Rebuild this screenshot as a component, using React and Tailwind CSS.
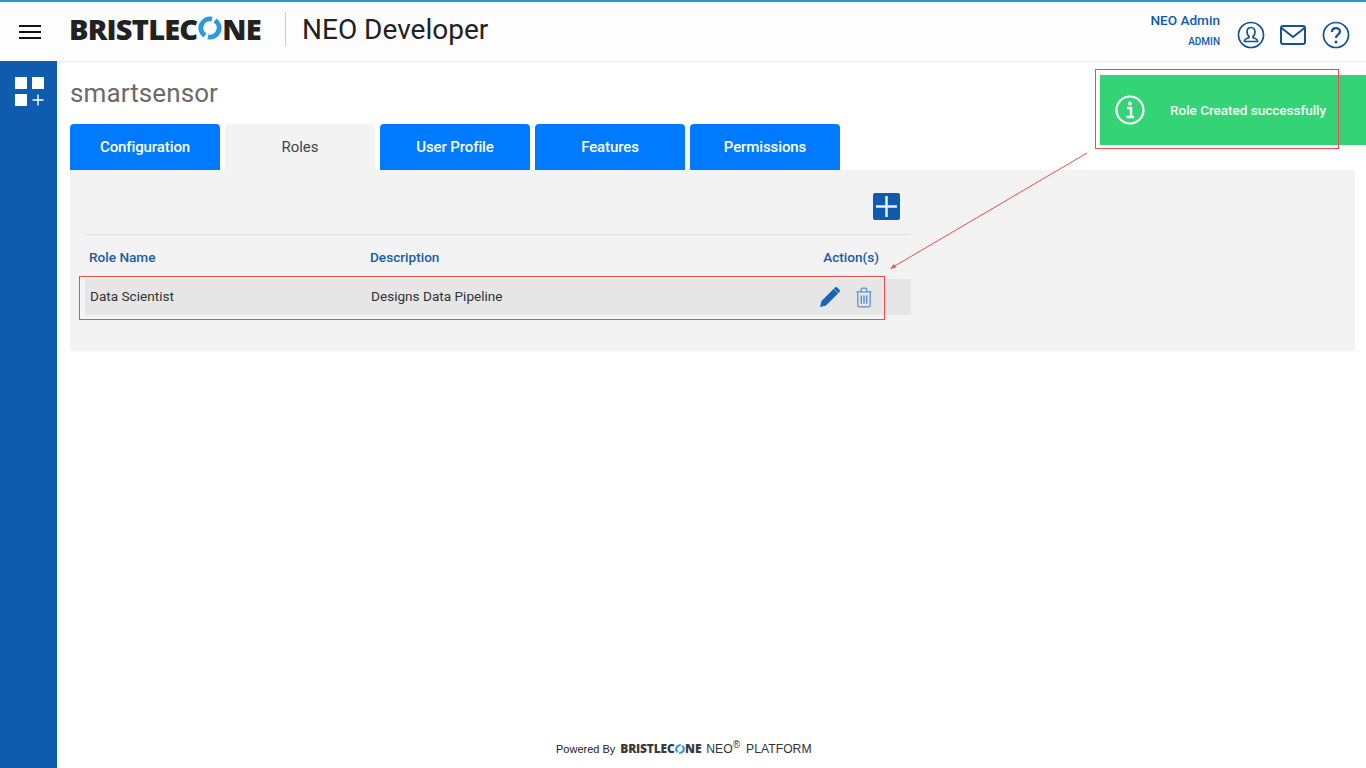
const Logo = ({ small }) => (
  <span className={small ? "inline-flex items-center font-[family-name:Open_Sans] font-extrabold text-[12px] leading-none tracking-[-0.2px] text-[#3a3a3a]" : "inline-flex items-center -ml-px font-[family-name:Open_Sans] font-extrabold text-[29px] leading-none tracking-[-0.8px] text-[#222222]"}>
    BRISTLEC
    <svg viewBox="0 0 24 24" className={small ? "w-[10px] h-[10px] mx-[0.3px]" : "w-[24px] h-[24px] mx-[0.5px]"}>
      <path d="M14 3.2A9 9 0 0 0 7 19.5" fill="none" stroke="#2a9bd8" strokeWidth="5" />
      <path d="M10 20.8A9 9 0 0 0 17 4.5" fill="none" stroke="#2a9bd8" strokeWidth="5" />
    </svg>
    NE
  </span>
);

const Tab = ({ label, active }) => (
  <div className={active
    ? "w-[150px] h-[46px] rounded-t flex items-center justify-center bg-[#f3f3f3] text-[#444444] text-[15px]"
    : "w-[150px] h-[46px] rounded-t flex items-center justify-center bg-[#007bff] text-white text-[15px] font-medium tracking-[-0.1px]"}>
    {label}
  </div>
);

export default function App() {
  return (
    <div className="relative h-screen flex flex-col overflow-hidden bg-white font-[family-name:Roboto]">
      <header className="h-[61px] shrink-0 flex items-center border-t-2 border-[#2a9bd8] bg-[#fdfdfd] shadow-[0_1px_1px_#ececec]">
        <div className="w-[70px] shrink-0 pl-[19px] flex flex-col gap-[4px]">
          <span className="block w-[22px] h-[2px] bg-[#111111]" />
          <span className="block w-[22px] h-[2px] bg-[#111111]" />
          <span className="block w-[22px] h-[2px] bg-[#111111]" />
        </div>
        <div className="w-[192px] -mt-[3px]"><Logo /></div>
        <div className="ml-[23px] h-[34px] w-px bg-[#cccccc] -mt-[5px]" />
        <div className="ml-[16px] text-[28px] leading-none text-[#222222] -mt-[3px]">NEO Developer</div>
        <div className="ml-auto flex items-center">
          <div className="flex flex-col items-end text-[#0f5cae] -mt-[3px]">
            <span className="text-[13.6px] leading-[16px] font-medium">NEO Admin</span>
            <span className="text-[10px] leading-[12px] font-medium mt-[8px]">ADMIN</span>
          </div>
          <svg viewBox="0 0 28 28" className="w-[28px] h-[28px] ml-[17px] mt-[7px]" fill="none" stroke="#16528f" strokeWidth="1.7">
            <circle cx="14" cy="14" r="12.5" />
            <path d="M14 6.5c-2.6 0-4 2-4 4.4 0 2 .9 3.500 2 4.400v1.200c-1.500 1-4.500 1.200-4.500 3.300v.7h13v-.7c0-2.100-3-2.300-4.500-3.300v-1.200c1.100-.9 2-2.400 2-4.400 0-2.400-1.400-4.400-4-4.400z" />
          </svg>
          <svg viewBox="0 0 26 22" className="w-[26px] h-[22px] ml-[15px] mt-[7px]" fill="none" stroke="#16528f" strokeWidth="2">
            <rect x="1" y="2" width="24" height="18" rx="2" />
            <path d="M1.500 4l11.500 9L24.500 4" />
          </svg>
          <svg viewBox="0 0 28 28" className="w-[28px] h-[28px] ml-[16px] mr-[16px] mt-[7px]" fill="none" stroke="#16528f" strokeWidth="1.7">
            <circle cx="14" cy="14" r="12.500" />
            <path d="M10 11c0-2.400 1.800-3.800 4-3.800s4 1.400 4 3.400c0 3-4 3-4 6.400" strokeWidth="2.300" />
            <circle cx="14" cy="21" r="1.500" fill="#16528f" stroke="none" />
          </svg>
        </div>
      </header>

      <div className="flex-1 flex min-h-0">
        <aside className="w-[57px] shrink-0 bg-[#0f5cae] pt-[16px] pl-[15px]">
          <div className="grid grid-cols-[12px_12px] gap-x-[5px] gap-y-[5px]">
            <span className="block h-[12px] bg-white" />
            <span className="block h-[12px] bg-white" />
            <span className="block h-[12px] bg-white" />
            <svg viewBox="0 0 12 12" className="w-[12px] h-[12px]" stroke="#ffffff" strokeWidth="1.400"><path d="M6 0.500v11M0.500 6h11" /></svg>
          </div>
        </aside>

        <main className="flex-1 min-w-0 flex flex-col pl-[13px] pr-[11px]">
          <h1 className="mt-[17px] h-[30px] text-[26px] leading-[30px] tracking-[0.1px] text-[#6a6a6a]">smartsensor</h1>
          <div className="mt-[16px] flex gap-[5px]">
            <Tab label="Configuration" />
            <Tab label="Roles" active />
            <Tab label="User Profile" />
            <Tab label="Features" />
            <Tab label="Permissions" />
          </div>
          <section className="h-[181px] bg-[#f3f3f3] pl-[15px] pt-[23px]">
            <div className="w-[826px]">
              <div className="h-[42px] border-b border-[#dfdfe6] flex justify-end items-start pr-[11px]">
                <div className="w-[27px] h-[27px] rounded-[2px] bg-[#0f5cae] flex items-center justify-center">
                  <svg viewBox="0 0 20 20" className="w-[21px] h-[21px]" stroke="#e8eef6" strokeWidth="2.400"><path d="M10 0v20M0 10h20" /></svg>
                </div>
              </div>
              <div className="h-[44px] flex items-center text-[13.6px] font-medium text-[#1a5cab]">
                <span className="w-[285px] pl-[4px]">Role Name</span>
                <span className="flex-1">Description</span>
                <span className="mr-[32px]">Action(s)</span>
              </div>
              <div className="h-[36px] bg-[#e6e6e6] flex items-center text-[13.6px] text-[#333333]">
                <span className="w-[286px] pl-[5px] pb-[1px]">Data Scientist</span>
                <span className="flex-1 pb-[1px]">Designs Data Pipeline</span>
                <svg viewBox="0 0 22 22" className="w-[22px] h-[22px] mr-[14px]" fill="#1a63b5">
                  <path d="M1 21l1.500-6L14.500 3l4.500 4.500L7 19.500z" />
                  <path d="M15.800 1.700c.8-.8 1.800-.8 2.500-.1l2.100 2.100c.7.700.7 1.700-.1 2.500l-1 1-4.500-4.500z" />
                </svg>
                <svg viewBox="0 0 18 22" className="w-[18px] h-[21px] mr-[38px] mt-[1px]" fill="none" stroke="#5c8fcb" strokeWidth="1.300">
                  <path d="M1 5h16M6 4.500V3c0-1 .8-1.800 1.800-1.800h2.400c1 0 1.800.8 1.800 1.800v1.500" />
                  <path d="M2.500 5.500v13.300c0 1.200.8 2 2 2h9c1.200 0 2-.8 2-2V5.500" />
                  <path d="M6.200 9v8.500M9 9v8.500M11.800 9v8.500" strokeWidth="1.500" />
                </svg>
              </div>
            </div>
          </section>
          <footer className="mt-auto h-[39px] flex items-start pt-[11px] pl-[486px] text-[#222222] font-[family-name:Liberation_Sans]">
            <span className="text-[11px] leading-[18px] mr-[5px]">Powered By</span>
            <span className="h-[18px] w-[80px] flex items-center"><Logo small /></span>
            <span className="text-[12.2px] leading-[18px] ml-[6px] text-[#333333]">NEO<sup className="text-[10px] leading-none">®</sup></span>
            <span className="text-[12.2px] leading-[18px] ml-[6px] text-[#333333]">PLATFORM</span>
          </footer>
        </main>
      </div>

      {/* toast */}
      <div className="absolute left-[1100px] top-[75px] w-[266px] h-[70px] bg-[#34d375] flex items-center text-white">
        <svg viewBox="0 0 30 30" className="w-[30px] h-[30px] ml-[15px]" fill="none" stroke="#ffffff" strokeWidth="2.200">
          <circle cx="15" cy="15" r="13.500" />
          <circle cx="15" cy="8.500" r="1.900" fill="#ffffff" stroke="none" />
          <path d="M12 13h4v8.500M11.500 22h7.500" strokeWidth="2.500" />
        </svg>
        <span className="ml-[25px] text-[13.6px] font-medium tracking-[-0.05px] text-[#f2fbf5]">Role Created successfully</span>
      </div>

      {/* annotation */}
      <div className="absolute left-[1095px] top-[69px] w-[244px] h-[80px] border border-[#f04b4b]" />
      <div className="absolute left-[79px] top-[276px] w-[806px] h-[44px] border border-[#f04b4b]" />
      <svg className="absolute left-[880px] top-[145px] w-[215px] h-[130px]" viewBox="0 0 215 130" fill="none">
        <path d="M207 8L13 122" stroke="#f04b4b" strokeWidth="1" />
        <path d="M10 124l6-1.500-2-3.500z" fill="#f04b4b" />
      </svg>
    </div>
  );
}
